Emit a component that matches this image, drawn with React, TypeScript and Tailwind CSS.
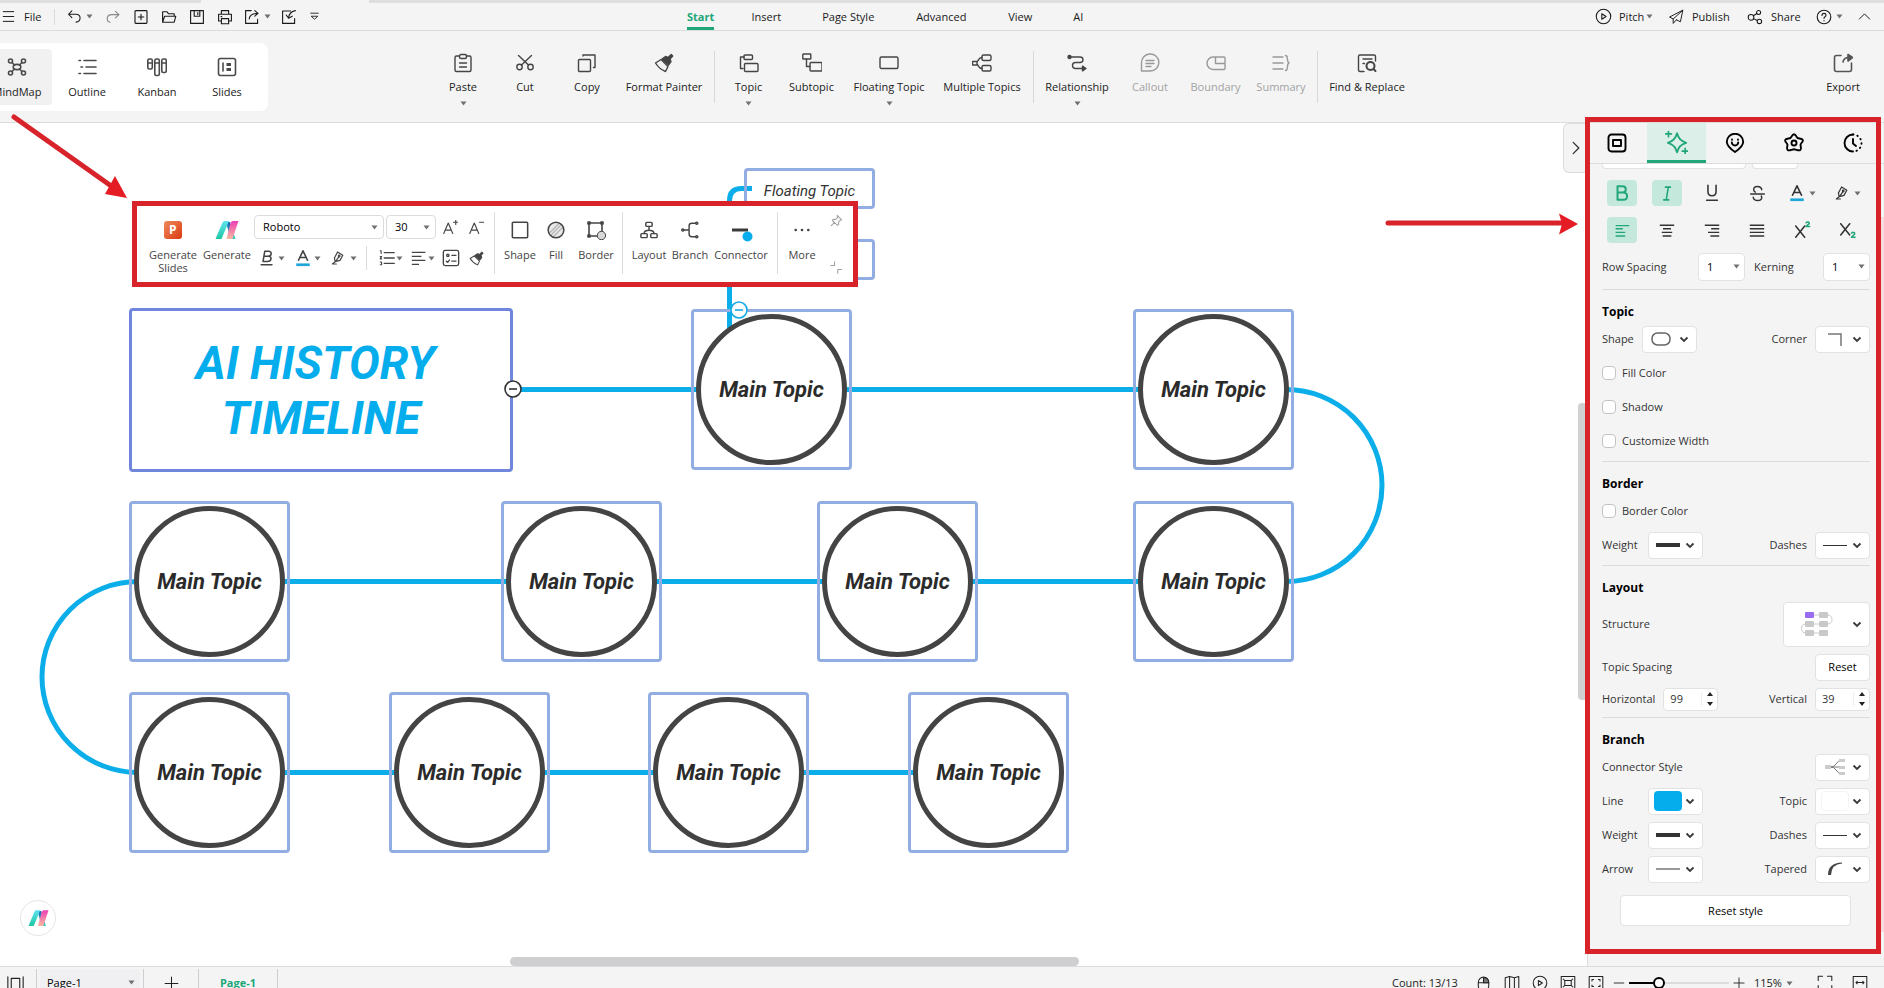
import React from 'react';

type IconProps = { size?: number; sw?: number; className?: string; children: React.ReactNode };

const Icon = ({ size = 20, sw = 1.4, className = '', children }: IconProps) => (
  <svg
    width={size}
    height={size}
    viewBox="0 0 20 20"
    fill="none"
    stroke="currentColor"
    strokeWidth={sw}
    strokeLinecap="round"
    strokeLinejoin="round"
    className={`shrink-0 ${className}`}
    aria-hidden="true"
  >
    {children}
  </svg>
);

const Caret = ({ className = '' }: { className?: string }) => (
  <svg width="7" height="5" viewBox="0 0 7 5" className={`shrink-0 text-[#707070] ${className}`} aria-hidden="true">
    <path d="M0.5 0.5h6L3.5 4.5z" fill="currentColor" />
  </svg>
);

const Chevron = () => (
  <svg width="10" height="7" viewBox="0 0 10 7" fill="none" stroke="#3a3a3a" strokeWidth="1.8" className="shrink-0" aria-hidden="true">
    <path d="M1.5 1.5L5 5l3.5-3.5" />
  </svg>
);

const Logo = ({ id, className = '' }: { id: string; className?: string }) => (
  <svg viewBox="0 0 24 18" className={className} aria-hidden="true">
    <defs>
      <linearGradient id={`${id}-teal`} x1="0" y1="0" x2="0" y2="1">
        <stop offset="0" stopColor="#5fe3f0" />
        <stop offset="1" stopColor="#1fc7a4" />
      </linearGradient>
      <linearGradient id={`${id}-blue`} x1="0" y1="0" x2="0" y2="1">
        <stop offset="0" stopColor="#1763b8" />
        <stop offset="1" stopColor="#35d0c0" />
      </linearGradient>
      <linearGradient id={`${id}-pink`} x1="0" y1="0" x2="0" y2="1">
        <stop offset="0" stopColor="#ee3fb4" />
        <stop offset="1" stopColor="#f8b9a0" />
      </linearGradient>
    </defs>
    <path d="M11 1h4L20.500 18h-5z" fill={`url(#${id}-blue)`} />
    <path d="M7.500 1.500Q8 0 9.500 0h4.500L6.500 18H0.500z" fill={`url(#${id}-teal)`} />
    <path d="M15.500 2Q16.500 0 18 0h5.500L17.500 18h-6z" fill={`url(#${id}-pink)`} />
  </svg>
);

/* ---------- icons ---------- */

const BrushIcon = ({ size = 20 }: { size?: number }) => (
  <Icon size={size}>
    <path d="M1.500 10l5.500-3.500 7 7-2.500 5C7.500 17 4 14 1.500 10z" />
    <path d="M8 6l3.500-2.500 2.700 1 3-3 1.500 1.500-2.700 3 1 2.700L14.500 12z" fill="currentColor" />
  </Icon>
);

const PenIcon = () => (
  <Icon size={16} sw={1.5}>
    <path d="M9.500 2.500l6.500 4-3.500 6.500-6 1.500-1-4.500z" />
    <path d="M6.500 14.500L3 17.500h5M11 8.500l-3.500 5" />
    <circle cx="11.500" cy="7.500" r="1" />
  </Icon>
);

const FontColorIcon = () => (
  <Icon size={18} sw={1.8}>
    <path d="M5 12.500L10 2l5 10.500M6.700 9.500h6.600" />
    <path d="M2.500 17.500h15" stroke="#1fa5d8" strokeWidth="3" strokeLinecap="butt" />
  </Icon>
);

const BoldSlantIcon = () => (
  <Icon size={18} sw={1.7}>
    <path d="M7.500 2.500h4.200c4.300 0 3.800 5.500-.5 5.500H6.600L7.500 2.500zM6.600 8h4.900c4.500 0 3.600 5.800-.9 5.800H5.600L6.600 8zM3.500 17.500h12" />
  </Icon>
);

const ListIcon = () => (
  <Icon size={18} sw={1.6}>
    <path d="M7 4h11M7 10h11M7 16h11" />
    <path d="M2.500 2h1v3M2.500 8.500h1.500l-1.500 2.500h1.500M2.500 14.500h1.500v3H2.500" strokeWidth="1.200" />
  </Icon>
);

const AlignIcon = ({ d, size = 16 }: { d: string; size?: number }) => (
  <Icon size={size} sw={1.7}>
    <path d={d} strokeLinecap="butt" />
  </Icon>
);

const CheckListIcon = () => (
  <Icon size={18} sw={1.5}>
    <rect x="1.500" y="1.500" width="17" height="17" rx="2" />
    <circle cx="6.500" cy="7" r="1.300" />
    <path d="M11 7h4.500M4.800 13.500l1.500 1.300 2-2.500M11 13.500h4.500" />
  </Icon>
);

const PlayIcon = ({ size = 17 }: { size?: number }) => (
  <Icon size={size} sw={1.3}>
    <circle cx="10" cy="10" r="8.500" />
    <path d="M8 6.800v6.400l5-3.200z" />
  </Icon>
);

/* ---------- top bar ---------- */

const quickActions = [
  {
    label: 'Redo',
    muted: true,
    icon: <path d="M13 3l4.500 4L13 11M17 7H8.500C1 7 1.500 16 6.500 16.500" />,
  },
  {
    label: 'New',
    icon: <path d="M3.500 2h13q1 0 1 1v14q0 1-1 1h-13q-1 0-1-1V3q0-1 1-1zM10 6.500v7M6.500 10h7" />,
  },
  {
    label: 'Open',
    icon: <path d="M2 16.500V3.500h5.500l2 2.500h7v3M2 16.500L4.500 9h14L16.500 16.500z" />,
  },
  {
    label: 'Save',
    icon: <path d="M2 2h16v16H2zM6.500 2v7h7V2M11 4.500v2.500" />,
  },
  {
    label: 'Print',
    icon: <path d="M5.500 6.500V2h9v4.500M5.500 15H2V6.500h16V15h-3.500M5.500 12h9v6.500h-9zM5 9.500h1" />,
  },
];

const menuTabs = [
  { label: 'Insert', width: 'ml-[18px] w-[68px]' },
  { label: 'Page Style', width: 'w-24' },
  { label: 'Advanced', width: 'w-[90px]' },
  { label: 'View', width: 'w-[68px]' },
  { label: 'AI', width: 'w-12' },
];

const TopBar = () => (
  <header className="shrink-0 bg-[#f4f4f4]">
    <div className="flex h-[3px] bg-[#dddee0]">
      <div className="ml-[201px] w-[168px] bg-[#f4f4f4]" />
    </div>
    <div className="flex h-7 items-center border-b border-[#dcdcdc] text-[#1a1a1a]">
      <div className="flex w-[687px] shrink-0 items-center">
        <button aria-label="Menu" className="flex w-4 justify-center">
          <Icon size={15} sw={1.3}>
            <path d="M3 3.500h14M3 10h14M3 16.500h14" />
          </Icon>
        </button>
        <button className="ml-2 w-[30px] text-left">File</button>
        <span className="h-4 w-px bg-[#dcdcdc]" />
        <button aria-label="Undo" className="ml-3 flex w-8 items-center gap-1">
          <Icon size={15}>
            <path d="M6.500 2.500L2 7l4.500 4.500M2.500 7H12c7.500 0 7 10 0 10.500" />
          </Icon>
          <Caret />
        </button>
        {quickActions.map((a) => (
          <button
            key={a.label}
            aria-label={a.label}
            className={`flex w-7 justify-center ${a.muted ? 'text-[#888]' : ''}`}
          >
            <Icon size={16}>{a.icon}</Icon>
          </button>
        ))}
        <button aria-label="Share file" className="ml-[5px] flex w-8 items-center gap-1">
          <Icon size={16}>
            <path d="M9 2H2v16h15v-5M6.500 12.500C7 7.500 10 5.500 17 5.500M13.500 2L17.500 5.500l-4 3.500" />
          </Icon>
          <Caret />
        </button>
        <button aria-label="Import" className="flex w-[26px] justify-center">
          <Icon size={16}>
            <path d="M12 2.500H2V18h15v-6M18 2c-5 1-8 4-8.500 9M6.500 7.500l3 4 4.500-2.500" />
          </Icon>
        </button>
        <button aria-label="More" className="flex w-6 justify-center">
          <Icon size={11} sw={1.600}>
            <path d="M3 4h14M4.500 10l5.500 5 5.500-5z" />
          </Icon>
        </button>
      </div>
      <nav className="flex h-full items-center text-center">
        <a href="#start" className="flex h-full items-center border-b-[3px] border-[#21a67a] pt-[3px] font-bold text-[#21a67a]">
          Start
        </a>
        {menuTabs.map((t) => (
          <a key={t.label} href={`#${t.label}`} className={t.width}>
            {t.label}
          </a>
        ))}
      </nav>
      <div className="ml-auto flex items-center">
        <button className="flex w-[73px] items-center">
          <PlayIcon />
          <span className="ml-[7px]">Pitch</span>
          <Caret className="ml-[2px]" />
        </button>
        <button className="flex w-[79px] items-center gap-2">
          <Icon size={16} sw={1.2}>
            <path d="M18.500 1.500L2 10l4.500 2.500L18.500 1.500 15.500 16l-5-2.500M6.500 12.500v5.500l4-4.500" />
          </Icon>
          Publish
        </button>
        <button className="flex w-[69px] items-center gap-2">
          <Icon size={16} sw={1.3}>
            <circle cx="5" cy="10.500" r="3.500" />
            <circle cx="14.500" cy="4.500" r="2.500" />
            <circle cx="15.500" cy="15.500" r="2.800" />
            <path d="M8 8.500l4.300-2.800M8 12l5 2.300" />
          </Icon>
          Share
        </button>
        <button aria-label="Help" className="flex w-[42px] items-center gap-1">
          <Icon size={16}>
            <circle cx="10" cy="10" r="8.500" />
            <path d="M7.500 8c0-3.500 5-3.200 5-.3 0 1.800-2.500 1.800-2.500 4M10 14.500v.3" />
          </Icon>
          <Caret />
        </button>
        <button aria-label="Collapse ribbon" className="w-[26px]">
          <Icon size={13} sw={1.500}>
            <path d="M2 14l8-8 8 8" />
          </Icon>
        </button>
      </div>
    </div>
  </header>
);

/* ---------- ribbon ---------- */

const modes = [
  {
    label: 'MindMap',
    active: true,
    icon: (
      <>
        <ellipse cx="10" cy="10" rx="3.800" ry="2.600" />
        <circle cx="3.500" cy="4" r="2" />
        <circle cx="16.500" cy="4" r="2" />
        <circle cx="3.500" cy="16" r="2" />
        <circle cx="16.500" cy="16" r="2" />
        <path d="M5 5.500l2.500 2.500M15 5.500L12.500 8M5 14.500L7.500 12M15 14.500L12.500 12" />
      </>
    ),
  },
  {
    label: 'Outline',
    icon: <path d="M2 3.500h1.500M7 3.500h12M4 10h1.500M9 10h10M2 16.500h1.500M7 16.500h12" />,
  },
  {
    label: 'Kanban',
    icon: (
      <>
        <rect x="0.800" y="2" width="4.500" height="10" rx="1.500" />
        <rect x="7.800" y="2" width="4.500" height="16.500" rx="1.500" />
        <rect x="14.800" y="2" width="4.500" height="13.500" rx="1.500" />
        <path d="M1 6h4M8 6h4M15 6h4" />
      </>
    ),
  },
  {
    label: 'Slides',
    icon: (
      <>
        <rect x="1.500" y="1.500" width="17" height="17" rx="2" />
        <path d="M6 6v8" />
        <path d="M9.500 7.500h4.500M9.500 12.500h4.500" strokeWidth="3" strokeLinecap="butt" />
      </>
    ),
  },
];

type Tool = { label: string; width: string; icon: React.ReactNode; caret?: boolean; off?: boolean };

const toolGroups: Tool[][] = [
  [
    {
      label: 'Paste',
      width: 'w-[62px]',
      caret: true,
      icon: (
        <>
          <path d="M6.500 3H3.500q-1.500 0-1.500 1.500v12.500q0 1.500 1.500 1.500h13q1.500 0 1.500-1.500V4.500Q18 3 16.500 3H13.500" />
          <rect x="6.500" y="1.500" width="7" height="4" rx="1.500" />
          <path d="M6.500 10h7M6.500 14h7" />
        </>
      ),
    },
    {
      label: 'Cut',
      width: 'w-[62px]',
      icon: (
        <>
          <circle cx="4.500" cy="14" r="2.700" />
          <circle cx="15.500" cy="14" r="2.700" />
          <path d="M6.500 12L16.500 2.500M13.500 12L3.500 2.500" />
        </>
      ),
    },
    {
      label: 'Copy',
      width: 'w-[62px]',
      icon: (
        <>
          <rect x="1.500" y="6.500" width="12" height="12" rx="1" />
          <path d="M6 2h12v12.500h-1.500M6 2v1" />
        </>
      ),
    },
    { label: 'Format Painter', width: 'w-[92px]', icon: null },
  ],
  [
    {
      label: 'Topic',
      width: 'w-[63px]',
      caret: true,
      icon: (
        <>
          <rect x="5" y="2" width="8.500" height="4.500" rx="1" />
          <rect x="5.500" y="10.500" width="13.500" height="8" rx="1" />
          <path d="M5 4H1.500v11.500H4" />
        </>
      ),
    },
    {
      label: 'Subtopic',
      width: 'w-[63px]',
      icon: (
        <>
          <rect x="0.800" y="1" width="8" height="5" rx="0.500" />
          <rect x="8" y="9.500" width="12" height="8.500" rx="1" />
          <path d="M4.500 6v7.500H8" />
        </>
      ),
    },
    {
      label: 'Floating Topic',
      width: 'w-[92px]',
      caret: true,
      icon: <rect x="1" y="4" width="18" height="11.500" rx="1.500" />,
    },
    {
      label: 'Multiple Topics',
      width: 'w-[94px]',
      icon: (
        <>
          <rect x="10" y="2" width="9" height="5.500" rx="1.500" />
          <rect x="10" y="12.500" width="9" height="5.500" rx="1.500" />
          <path d="M0.500 8.500h4.500v3.500H0.500zM10 4.500C6.500 4.500 7 7 5 9M10 15.500c-3.500 0-3-2.500-5-4.500" />
        </>
      ),
    },
  ],
  [
    {
      label: 'Relationship',
      width: 'w-[82px]',
      caret: true,
      icon: (
        <>
          <path d="M3 4h10c4 0 4 5.500 0 5.500H8.500c-4 0-4 6 0 6H15" />
          <circle cx="2.500" cy="4" r="1.500" fill="currentColor" />
          <path d="M15.500 13.200l3.500 2.300-3.500 2.300z" fill="currentColor" />
        </>
      ),
    },
    {
      label: 'Callout',
      width: 'w-16',
      off: true,
      icon: <path d="M1.500 18V10a8.700 8.500 0 1 1 8.700 8zM6 7.500h8M6 10.500h8M6 13.500h5" />,
    },
    {
      label: 'Boundary',
      width: 'w-[67px]',
      off: true,
      icon: <path d="M7 4h11q1 0 1 1v10.500q0 1-1 1H7C3.500 16.500 1 13.500 1 10.300S3.500 4 7 4zM9.500 4v6.500H19" />,
    },
    {
      label: 'Summary',
      width: 'w-16',
      off: true,
      icon: <path d="M2 4h10M2 10h10M2 16h10M14.500 2.500c3.500 0 .5 6.500 3.500 7.500-3 1-.0 7.500-3.500 7.500" />,
    },
  ],
  [
    {
      label: 'Find & Replace',
      width: 'w-[94px]',
      icon: (
        <>
          <path d="M7 18.500H3q-1.500 0-1.500-1.500V3.500Q1.500 2 3 2h14q1.500 0 1.500 1.500V8M6 6h9M6 10.500h1.500" />
          <circle cx="13.500" cy="13" r="4" strokeWidth="2" />
          <path d="M16.500 16l2 2" strokeWidth="2" />
        </>
      ),
    },
  ],
];

const Ribbon = () => (
  <div className="flex h-[92px] shrink-0 items-start overflow-hidden border-b border-[#dcdcdc] bg-[#f4f4f4] text-[#222]">
    <div className="-ml-6 mt-3 flex shrink-0 rounded-lg bg-white p-[6px]">
      {modes.map((m) => (
        <button
          key={m.label}
          className={`flex h-14 w-[70px] flex-col items-center gap-[7px] rounded pt-2 ${m.active ? 'bg-[#f1f1f1]' : ''}`}
        >
          <Icon size={20} sw={1.6} className="text-[#4a4a4a]">
            {m.icon}
          </Icon>
          {m.label}
        </button>
      ))}
    </div>
    <div className="ml-[164px] flex shrink-0 pt-[22px]">
      {toolGroups.map((group, i) => (
        <React.Fragment key={i}>
          {i > 0 && <span className="-mt-[2px] ml-1 mr-[2px] h-[52px] w-px bg-[#d8d8d8]" />}
          {group.map((t) => (
            <button
              key={t.label}
              disabled={t.off}
              className={`flex flex-col items-center ${t.width} ${t.off ? 'text-[#a3a3a3]' : ''}`}
            >
              <span className={t.off ? 'text-[#999]' : 'text-[#444]'}>
                {t.icon ? <Icon size={20}>{t.icon}</Icon> : <BrushIcon />}
              </span>
              <span className="mt-[6px] whitespace-nowrap">{t.label}</span>
              {t.caret && <Caret className="mt-[6px]" />}
            </button>
          ))}
        </React.Fragment>
      ))}
    </div>
    <button className="ml-auto flex w-[82px] shrink-0 flex-col items-center gap-[6px] pt-[22px]">
      <Icon size={20} sw={1.6} className="text-[#555]">
        <path d="M8 2.500H3.500Q1.500 2.500 1.500 4.500v12q0 2 2 2h13q2 0 2-2V10M10 9c.5-3 2.500-4.500 6-4.500" />
        <path d="M15 1.500l4.500 3L15 8z" fill="currentColor" />
      </Icon>
      Export
    </button>
  </div>
);

/* ---------- canvas ---------- */

// node positions on the free canvas, top-left corner
const topics = [
  { x: 691, y: 186 },
  { x: 1133, y: 186 },
  { x: 129, y: 378 },
  { x: 501, y: 378 },
  { x: 817, y: 378 },
  { x: 1133, y: 378 },
  { x: 129, y: 569 },
  { x: 389, y: 569 },
  { x: 648, y: 569 },
  { x: 908, y: 569 },
];

const Diagram = () => (
  <>
    <svg className="absolute inset-0 h-full w-full" fill="none" stroke="#0caeea" strokeWidth="5" aria-hidden="true">
      <path d="M510 266.500H1286A96 96 0 0 1 1286 458.500H138A96 95.500 0 0 0 138 649.500H980" />
      <path d="M752 65.500H741.500Q729.500 65.500 729.500 77.500V220" />
    </svg>
    <div className="absolute left-[129px] top-[185px] flex h-[164px] w-[384px] items-center justify-center rounded border-[3px] border-[#6f86dc] bg-white pt-[2px]">
      <h1 className="whitespace-pre text-center font-[Roboto,sans-serif] text-[46px] font-bold italic leading-[55px] text-[#05adec]">
        {'AI HISTORY \nTIMELINE'}
      </h1>
    </div>
    <div className="absolute left-[744px] top-[45px] flex h-[41px] w-[131px] items-center justify-center rounded border-[3px] border-[#92ade2] pt-1 font-[Roboto,sans-serif] text-[15px] italic text-[#333]">
      Floating Topic
    </div>
    <div className="absolute left-[744px] top-[116px] h-[41px] w-[131px] rounded border-[3px] border-[#92ade2]" />
    {topics.map((t, i) => (
      <div
        key={i}
        className="absolute h-[161px] w-[161px] rounded border-[3px] border-[#92ade2] p-[2px]"
        style={{ left: t.x, top: t.y }}
      >
        <div className="flex h-full items-center justify-center rounded-full border-[5px] border-[#444] bg-white font-[Roboto,sans-serif] text-[22px] font-bold italic text-[#2b2b2b]">
          Main Topic
        </div>
      </div>
    ))}
    <button aria-label="Collapse branch" className="absolute left-[504px] top-[257px]">
      <svg width="18" height="18" viewBox="0 0 18 18" fill="#fff" stroke="#333" strokeWidth="1.600">
        <circle cx="9" cy="9" r="8" />
        <path d="M5 9h8" />
      </svg>
    </button>
    <button aria-label="Collapse floating topics" className="absolute left-[730px] top-[178px]">
      <svg width="18" height="18" viewBox="0 0 18 18" fill="#fff" stroke="#12abe6" strokeWidth="1.600">
        <circle cx="9" cy="9" r="8" />
        <path d="M5 9h8" />
      </svg>
    </button>
  </>
);

const QuickItem = ({ label, width, children }: { label: string; width: string; children: React.ReactNode }) => (
  <button className={`flex shrink-0 flex-col items-center pt-[14px] ${width}`}>
    <span className="flex h-5 items-center">{children}</span>
    <span className="mt-2 leading-[13px]">{label}</span>
  </button>
);

const Rule = ({ className = '' }: { className?: string }) => (
  <span className={`mt-[6px] h-[62px] w-px shrink-0 bg-[#dcdcdc] ${className}`} />
);

const QuickToolbar = () => (
  <div className="absolute left-[132px] top-[78px] h-[86px] w-[726px] border-[5px] border-[#d8232a] bg-white">
    <div className="flex items-start pl-[10px] text-[#444]">
      <QuickItem label="Generate Slides" width="w-[52px]">
        <svg width="18" height="18" viewBox="0 0 18 18" aria-hidden="true">
          <defs>
            <linearGradient id="slides" x1="0" y1="0" x2="1" y2="1">
              <stop offset="0" stopColor="#f08a5c" />
              <stop offset="1" stopColor="#d93a12" />
            </linearGradient>
          </defs>
          <rect width="18" height="18" rx="3" fill="url(#slides)" />
          <text x="5" y="13" fontSize="12" fontWeight="700" fill="#fff">P</text>
        </svg>
      </QuickItem>
      <QuickItem label="Generate" width="ml-px w-[54px]">
        <Logo id="gen" className="h-[18px] w-6" />
      </QuickItem>
      <div className="flex w-[236px] shrink-0 flex-col">
        <div className="mt-[9px] flex items-center gap-[2px] text-black">
          <div className="relative">
            <select aria-label="Font" className="h-6 w-[130px] appearance-none rounded border border-[#dcdcdc] bg-white pl-2">
              <option>Roboto</option>
            </select>
            <Caret className="pointer-events-none absolute right-[6px] top-[10px]" />
          </div>
          <div className="relative">
            <select aria-label="Font size" className="h-6 w-[50px] appearance-none rounded border border-[#dcdcdc] bg-white pl-2">
              <option>30</option>
            </select>
            <Caret className="pointer-events-none absolute right-[6px] top-[10px]" />
          </div>
          <button aria-label="Increase font size" className="flex w-6 justify-center text-[#444]">
            <Icon size={15} sw={1.5}>
              <path d="M1 18L7 4 13 18M3.200 13.500h7.600M17 0v6M14 3h6" />
            </Icon>
          </button>
          <button aria-label="Decrease font size" className="flex w-6 justify-center text-[#444]">
            <Icon size={15} sw={1.5}>
              <path d="M1 18L7 4 13 18M3.200 13.500h7.600M14 3h6" />
            </Icon>
          </button>
        </div>
        <div className="mt-[7px] flex h-6 items-center pl-1">
          <button aria-label="Bold" className="flex w-9 items-center gap-[2px]"><BoldSlantIcon /><Caret /></button>
          <button aria-label="Font color" className="flex w-9 items-center gap-[2px]"><FontColorIcon /><Caret /></button>
          <button aria-label="Highlight" className="flex w-9 items-center gap-1"><PenIcon /><Caret /></button>
          <span className="h-6 w-px bg-[#dcdcdc]" />
          <button aria-label="Numbering" className="ml-[11px] flex w-[33px] items-center"><ListIcon /><Caret /></button>
          <button aria-label="Align" className="flex w-[31px] items-center gap-px">
            <AlignIcon d="M1 3h17M1 8h12M1 13h17M1 18h9" />
            <Caret />
          </button>
          <button aria-label="Task list" className="w-[27px]"><CheckListIcon /></button>
          <button aria-label="Copy style"><BrushIcon size={15} /></button>
        </div>
      </div>
      <Rule className="ml-1" />
      <QuickItem label="Shape" width="ml-[7px] w-9">
        <Icon size={18} sw={1.700}>
          <rect x="1.500" y="1.500" width="17" height="17" rx="1" />
        </Icon>
      </QuickItem>
      <QuickItem label="Fill" width="w-9">
        <Icon size={18} sw={1.700}>
          <path d="M3 13L13 3M4 16L16 4M7 17.500L17.500 7" stroke="#999" strokeWidth="1.500" />
          <circle cx="10" cy="10" r="8.700" fill="#d4d4d4" fillOpacity="0.500" />
        </Icon>
      </QuickItem>
      <QuickItem label="Border" width="w-11">
        <Icon size={20} sw={1.6}>
          <rect x="3" y="3" width="13" height="13" />
          <path d="M2 2h2v2H2zM15 2h2v2h-2zM2 15h2v2H2z" fill="currentColor" />
          <circle cx="15.500" cy="15.500" r="4.200" fill="#d8d8d8" strokeWidth="1" />
        </Icon>
      </QuickItem>
      <Rule className="ml-1" />
      <QuickItem label="Layout" width="ml-[5px] w-[42px]">
        <Icon size={18} sw={1.6}>
          <rect x="6.500" y="1.500" width="7" height="4.500" rx="1" />
          <rect x="1" y="14" width="7" height="4.500" rx="1" />
          <rect x="12" y="14" width="7" height="4.500" rx="1" />
          <path d="M10 6v4M4.500 14c0-5 11-5 11 0" />
        </Icon>
      </QuickItem>
      <QuickItem label="Branch" width="w-10">
        <Icon size={18} sw={1.6}>
          <circle cx="2" cy="10" r="1.200" />
          <circle cx="17.500" cy="2.500" r="1.200" />
          <circle cx="17.500" cy="17.500" r="1.200" />
          <path d="M3 10h6M16 2.500h-4q-3 0-3 3v9q0 3 3 3h4" />
        </Icon>
      </QuickItem>
      <QuickItem label="Connector" width="w-[62px]">
        <svg width="24" height="24" viewBox="0 0 24 24" aria-hidden="true">
          <path d="M3 12h16" stroke="#3a3a3a" strokeWidth="3" />
          <circle cx="18.500" cy="18.500" r="5" fill="#05adec" />
        </svg>
      </QuickItem>
      <Rule className="ml-[5px]" />
      <QuickItem label="More" width="ml-1 w-10">
        <Icon size={18}>
          <path d="M3 10h.010M10 10h.010M17 10h.010" strokeWidth="3" />
        </Icon>
      </QuickItem>
      <div className="ml-2 flex h-[76px] flex-col justify-between py-[8px] text-[#a0a0a0]">
        <button aria-label="Pin">
          <Icon size={13} sw={1.6}>
            <path d="M11 2l7 7-2 .5-3 3 .5 3.500-2 1.500L3.500 10 5 8l3.500.5 3-3zM7 13l-5 5" />
          </Icon>
        </button>
        <button aria-label="Collapse toolbar">
          <Icon size={13} sw={1.6}>
            <path d="M1 7h6V1M12 19v-6h6" />
          </Icon>
        </button>
      </div>
    </div>
  </div>
);

const Canvas = () => (
  <main className="relative min-w-0 flex-1 overflow-hidden bg-white">
    <Diagram />
    <QuickToolbar />
    <button aria-label="AI assistant" className="absolute left-5 top-[777px] flex h-9 w-9 items-center justify-center rounded-full border border-[#e4e4e4] bg-white">
      <Logo id="ai" className="h-4 w-[21px]" />
    </button>
    <div className="absolute bottom-0 left-[510px] h-[9px] w-[569px] rounded-full bg-[#cfcfd1]" />
    <div className="absolute right-0 top-[280px] h-[297px] w-[9px] rounded bg-[#d0d0d0]" />
    <button aria-label="Hide panel" className="absolute right-0 top-0 flex h-[50px] w-6 items-center justify-center rounded-l-md border border-r-0 border-[#dcdcdc] bg-[#f4f4f4] text-[#333]">
      <Icon size={14} sw={1.900}>
        <path d="M6 2l8 8-8 8" />
      </Icon>
    </button>
  </main>
);

/* ---------- side panel ---------- */

const panelTabs = [
  {
    label: 'Canvas',
    icon: (
      <>
        <rect x="1.500" y="1.500" width="17" height="17" rx="3" />
        <rect x="6" y="7" width="8" height="6" />
      </>
    ),
  },
  {
    label: 'Style',
    active: true,
    icon: (
      <>
        <path d="M10.500 2Q12 8.500 18.500 10.300 12 12 10.500 18.500 8.800 12 2.500 10.300 8.800 8.500 10.500 2z" strokeWidth="1.600" />
        <path d="M3 0v5M.5 2.500h5M17.500 15v5M15 17.500h5" strokeWidth="1.500" />
      </>
    ),
  },
  {
    label: 'Stickers',
    icon: (
      <>
        <path d="M10 19C4 15 1.800 12.500 1.800 8.800a8.200 8 0 0 1 16.400 0C18.200 12.500 16 15 10 19z" />
        <path d="M6.800 9.500c.5 4 5.900 4 6.400 0M7 6.500v.2M13 6.500v.2" />
      </>
    ),
  },
  {
    label: 'Badges',
    icon: (
      <>
        <path d="M10 1.200c2 0 2.300 2.900 3.500 3.700s4.800.3 5.300 2.100-1.900 3-2.200 4.500 1.200 4.300-.3 5.500-4.300-.7-6.300-.7-4.800 1.900-6.300.7 .0-4-.3-5.500S.7 8.800 1.200 7s4.100-1.300 5.300-2.100S8 1.200 10 1.200z" />
        <circle cx="10" cy="10" r="2.500" />
      </>
    ),
  },
  {
    label: 'History',
    icon: (
      <>
        <path d="M10 1.500a8.500 8.500 0 0 0 0 17M10 6v4.500l3 2.500" />
        <path d="M10 1.500a8.500 8.500 0 0 1 0 17" strokeDasharray="0.500 4" />
      </>
    ),
  },
];

const PanelSection = ({ title, children }: { title: string; children: React.ReactNode }) => (
  <section className="border-t border-[#dcdcdc] pb-[3px] pt-3">
    <h2 className="flex h-5 items-center text-xs font-bold text-black">{title}</h2>
    {children}
  </section>
);

const PanelRow = ({ children }: { children: React.ReactNode }) => (
  <div className="flex h-[34px] items-center justify-between">{children}</div>
);

const Picker = ({
  label,
  labelWidth = '',
  hideLabel,
  children,
}: {
  label: string;
  labelWidth?: string;
  hideLabel?: boolean;
  children: React.ReactNode;
}) => (
  <div className="flex items-center gap-2">
    {!hideLabel && <span className={labelWidth}>{label}</span>}
    <button
      aria-label={label}
      aria-haspopup="listbox"
      className="flex h-[27px] w-[55px] items-center justify-between rounded border border-[#e2e2e2] bg-white pl-px pr-[7px]"
    >
      <span className="flex flex-1 items-center justify-center">{children}</span>
      <Chevron />
    </button>
  </div>
);

const Check = ({ label }: { label: string }) => (
  <label className="flex h-[34px] items-center gap-[6px]">
    <input type="checkbox" className="h-[14px] w-[14px] appearance-none rounded-sm border border-[#c4c4c4] bg-white" />
    {label}
  </label>
);

const Stepper = ({ label, value }: { label: string; value: string }) => (
  <div className="flex items-center gap-2">
    <label htmlFor={label}>{label}</label>
    <span className="flex h-[23px] w-[55px] items-center rounded border border-[#e2e2e2] bg-white">
      <input id={label} defaultValue={value} className="w-[37px] bg-transparent pl-[6px] outline-none" />
      <span className="flex flex-1 flex-col items-center gap-[6px] border-l border-[#eee] text-[#222]">
        <button aria-label={`Increase ${label}`}>
          <svg width="6" height="4" viewBox="0 0 6 4" className="block"><path d="M0 4h6L3 0z" fill="currentColor" /></svg>
        </button>
        <button aria-label={`Decrease ${label}`}>
          <svg width="6" height="4" viewBox="0 0 6 4" className="block"><path d="M0 0h6L3 4z" fill="currentColor" /></svg>
        </button>
      </span>
    </span>
  </div>
);

const NumberSelect = ({ label }: { label: string }) => (
  <>
    <label htmlFor={label}>{label}</label>
    <span className="relative ml-auto">
      <select id={label} className="block h-7 w-[47px] appearance-none rounded border border-[#e2e2e2] bg-white pl-2 text-black">
        <option>1</option>
      </select>
      <Caret className="pointer-events-none absolute right-[5px] top-[11px]" />
    </span>
  </>
);

const ThickLine = () => <span className="h-1 w-6 bg-[#333]" />;
const ThinLine = () => <span className="h-px w-6 bg-[#333]" />;

const fmt = 'flex h-[26px] w-[30px] items-center justify-center rounded';
const fmtOn = 'flex h-[26px] w-[30px] items-center justify-center rounded bg-[#c4e8dc] text-[#21a67a]';

const SidePanel = () => (
  <aside className="w-[297px] shrink-0 overflow-hidden border-l border-[#dcdcdc] bg-[#f4f4f4] text-[#333]">
    <div className="flex h-[41px] border-b border-[#dcdcdc] text-black">
      {panelTabs.map((t) => (
        <button
          key={t.label}
          aria-label={t.label}
          className={`flex w-[59px] items-center justify-center border-b-[3px] pr-px pt-[2px] ${
            t.active ? 'border-[#21a67a] bg-[#dcefe9] text-[#21a67a]' : 'border-transparent'
          }`}
        >
          <Icon size={t.active ? 23 : 20} sw={1.900}>
            {t.icon}
          </Icon>
        </button>
      ))}
    </div>
    <div className="flex h-[5px] gap-[6px] pl-[14px]">
      <span className="w-[144px] rounded-b border border-t-0 border-[#e2e2e2] bg-white" />
      <span className="w-[46px] rounded-b border border-t-0 border-[#e2e2e2] bg-white" />
    </div>
    <div className="px-[14px]">
      <div className="mt-[11px] flex gap-[15px] pl-[5px]">
        <button aria-label="Bold" className={fmtOn}>
          <Icon size={18} sw={2.2}><path d="M5 2.500h5.500c5 0 5 7 0 7H5zM5 9.500h6.500c5.500 0 5.500 8 0 8H5z" /></Icon>
        </button>
        <button aria-label="Italic" className={fmtOn}>
          <Icon size={17} sw={1.800}><path d="M7.500 2.500h6M5.500 17.500h6M11 2.500l-2.500 15" /></Icon>
        </button>
        <button aria-label="Underline" className={fmt}>
          <Icon size={18} sw={1.700}><path d="M5.500 1.500v7c0 6 9 6 9 0v-7M4 18h12" /></Icon>
        </button>
        <button aria-label="Strikethrough" className={fmt}>
          <Icon size={17} sw={1.700}><path d="M15 5.500C14 .5 5.500.8 5.500 5.500c0 1.500 1 2.500 2 3M2 10.500h16M5 14.500c1 5 10 5 10 .5 0-.8-.2-1.500-.6-2" /></Icon>
        </button>
        <button aria-label="Text color" className={`${fmt} gap-[3px]`}><FontColorIcon /><Caret /></button>
        <button aria-label="Text highlight" className={`${fmt} gap-1`}><PenIcon /><Caret /></button>
      </div>
      <div className="mt-[11px] flex gap-[15px] pl-[5px]">
        <button aria-label="Align left" className={fmtOn}><AlignIcon d="M2 4.500h17M2 8.500h9M2 13h12M2 17.500h12" /></button>
        <button aria-label="Align center" className={fmt}><AlignIcon d="M1 4h18M5 8.500h10M3.500 13h13M4.500 17.500h11" /></button>
        <button aria-label="Align right" className={fmt}><AlignIcon d="M1 4h18M9 8.500h10M5 13h14M8 17.500h11" /></button>
        <button aria-label="Justify" className={fmt}><AlignIcon d="M1 4h18M1 8.500h18M1 13h18M1 17.500h18" /></button>
        <button aria-label="Superscript" className={fmt}>
          <Icon size={18} sw={1.700}>
            <path d="M3 5.500L13 18M13 5.500L3 18" />
            <path d="M14.500 2c1-1.500 4-1 3.500 1L14.500 6H18.500" stroke="#21a67a" />
          </Icon>
        </button>
        <button aria-label="Subscript" className={fmt}>
          <Icon size={18} sw={1.700}>
            <path d="M3 3L13 15.500M13 3L3 15.500" />
            <path d="M15 13.500c1-1.500 4-1 3.500 1L15 18H19" stroke="#21a67a" />
          </Icon>
        </button>
      </div>
      <div className="mb-2 mt-[10px] flex h-7 items-center">
        <span className="flex w-[143px] items-center"><NumberSelect label="Row Spacing" /></span>
        <span className="ml-[9px] flex flex-1 items-center"><NumberSelect label="Kerning" /></span>
      </div>

      <PanelSection title="Topic">
        <PanelRow>
          <Picker label="Shape">
            <svg width="20" height="14" fill="none" stroke="#666" strokeWidth="1.500"><rect x="1" y="1" width="18" height="12" rx="5.500" /></svg>
          </Picker>
          <Picker label="Corner">
            <svg width="14" height="13" fill="none" stroke="#777" strokeWidth="1.500"><path d="M0 1h13v12" /></svg>
          </Picker>
        </PanelRow>
        <Check label="Fill Color" />
        <Check label="Shadow" />
        <Check label="Customize Width" />
      </PanelSection>

      <PanelSection title="Border">
        <Check label="Border Color" />
        <PanelRow>
          <Picker label="Weight" labelWidth="w-[38px]"><ThickLine /></Picker>
          <Picker label="Dashes"><ThinLine /></Picker>
        </PanelRow>
      </PanelSection>

      <PanelSection title="Layout">
        <div className="flex h-[52px] items-center justify-between">
          Structure
          <button aria-label="Structure" aria-haspopup="listbox" className="flex h-[45px] w-[87px] items-center justify-between rounded border border-[#e2e2e2] bg-white pl-4 pr-[7px]">
            <svg width="34" height="26" viewBox="0 0 34 26" aria-hidden="true">
              <path d="M8 4h19q5 0 5 4.500t-5 4.500H6q-4.500 0-4.500 4.500T6 22h16" fill="none" stroke="#ccc" />
              <rect x="5" y="1" width="9" height="6" rx="1" fill="#9a6cf0" />
              <g fill="#c9c9c9">
                <rect x="19" y="1" width="9" height="6" rx="1" />
                <rect x="5" y="10" width="9" height="6" rx="1" />
                <rect x="19" y="10" width="9" height="6" rx="1" />
                <rect x="5" y="19" width="9" height="6" rx="1" />
                <rect x="19" y="19" width="9" height="6" rx="1" />
              </g>
            </svg>
            <Chevron />
          </button>
        </div>
        <PanelRow>
          Topic Spacing
          <button className="h-[27px] w-[55px] rounded border border-[#e2e2e2] bg-white text-black">Reset</button>
        </PanelRow>
        <div className="flex h-[30px] items-center justify-between">
          <Stepper label="Horizontal" value="99" />
          <Stepper label="Vertical" value="39" />
        </div>
      </PanelSection>

      <PanelSection title="Branch">
        <PanelRow>
          Connector Style
          <Picker label="Connector Style" hideLabel>
            <svg width="20" height="18" viewBox="0 0 20 18" aria-hidden="true">
              <path d="M5 9h10M6 9q3 0 5-3t5-4M6 9q3 0 5 3t5 4" fill="none" stroke="#777" />
              <path d="M0 7h6v4H0zM14 1h6v3h-6zM14 8h6v3h-6zM14 14h6v3h-6z" fill="#ccc" />
            </svg>
          </Picker>
        </PanelRow>
        <PanelRow>
          <Picker label="Line" labelWidth="w-[38px]"><span className="h-5 w-7 rounded bg-[#05adec]" /></Picker>
          <Picker label="Topic"><span className="h-5 w-7 rounded border border-[#f4f4f4] bg-white" /></Picker>
        </PanelRow>
        <PanelRow>
          <Picker label="Weight" labelWidth="w-[38px]"><ThickLine /></Picker>
          <Picker label="Dashes"><ThinLine /></Picker>
        </PanelRow>
        <PanelRow>
          <Picker label="Arrow" labelWidth="w-[38px]"><span className="h-[2px] w-6 bg-[#999]" /></Picker>
          <Picker label="Tapered">
            <svg width="14" height="14" viewBox="0 0 14 14" aria-hidden="true">
              <path d="M0 13Q0 1 14 .5v1Q3.500 2 3 13z" fill="#444" />
            </svg>
          </Picker>
        </PanelRow>
      </PanelSection>
      <button className="ml-[18px] mt-[6px] h-[31px] w-[231px] rounded border border-[#e2e2e2] bg-white text-black">Reset style</button>
    </div>
  </aside>
);

/* ---------- status bar ---------- */

const Divider = () => <span className="h-7 w-px bg-[#cfcfcf]" />;

const StatusBar = () => (
  <footer className="h-[22px] shrink-0 overflow-hidden border-t border-[#dcdcdc] bg-[#f4f4f4]">
    <div className="flex h-8 items-center text-[#222]">
      <button aria-label="Outline view" className="flex w-9 justify-center pr-[6px]">
        <Icon size={17} sw={1.300}><path d="M1 2v16M19 2v16M5 4h10v12H5z" /></Icon>
      </button>
      <Divider />
      <div className="relative mx-[3px]">
        <select aria-label="Page" className="h-7 w-[100px] appearance-none rounded bg-[#f0f0f3] pl-[7px] text-black">
          <option>Page-1</option>
        </select>
        <Caret className="pointer-events-none absolute right-[5px] top-[11px]" />
      </div>
      <Divider />
      <button aria-label="Add page" className="flex w-[54px] justify-center">
        <Icon size={15} sw={1.4}><path d="M1.500 10h17M10 1.500v17" /></Icon>
      </button>
      <Divider />
      <button className="w-[78px] font-bold text-[#21a67a]">Page-1</button>
      <Divider />
      <span className="ml-auto w-[78px] whitespace-nowrap">Count: 13/13</span>
      <button aria-label="Mouse mode" className="flex w-[27px] justify-center">
        <Icon size={15}>
          <path d="M3 9c0-10 14-10 14 0v4c0 8-14 8-14 0zM3 9h14" />
          <path d="M10 2v7h7c0-4-2-7-7-7z" fill="#777" />
        </Icon>
      </button>
      <button aria-label="Map" className="flex w-[29px] justify-center">
        <Icon size={16} sw={1.3}><path d="M1.500 3.500L7 2l6 1.500L18.500 2v14.500L13 18l-6-1.500L1.500 18zM7 2v14.500M13 3.500V18" /></Icon>
      </button>
      <button aria-label="Play" className="flex w-7 justify-center"><PlayIcon size={16} /></button>
      <button aria-label="Fit page" className="flex w-7 justify-center">
        <Icon size={16} sw={1.3}><path d="M1.500 2h17v16h-17zM6 7h8v6H6zM4 5l2 2M16 5l-2 2M4 15l2-2M16 15l-2-2" /></Icon>
      </button>
      <button aria-label="Fit selection" className="flex w-7 justify-center">
        <Icon size={16} sw={1.3}><path d="M1.500 2h17v16h-17zM5 7.500v-2h2M15 7.500v-2h-2M5 12.500v2h2M15 12.500v2h-2" /></Icon>
      </button>
      <button aria-label="Zoom out" className="flex w-[18px] justify-center">
        <Icon size={12} sw={1.500}><path d="M2 10h16" /></Icon>
      </button>
      <input
        type="range"
        aria-label="Zoom"
        defaultValue={27}
        className="ml-px h-[2px] w-[100px] appearance-none bg-[linear-gradient(to_right,#000_28%,#ddd_28%)] [&::-webkit-slider-thumb]:h-3 [&::-webkit-slider-thumb]:w-3 [&::-webkit-slider-thumb]:appearance-none [&::-webkit-slider-thumb]:rounded-full [&::-webkit-slider-thumb]:border-2 [&::-webkit-slider-thumb]:border-black [&::-webkit-slider-thumb]:bg-white"
      />
      <button aria-label="Zoom in" className="ml-px flex w-[18px] justify-center">
        <Icon size={12} sw={1.500}><path d="M1.500 10h17M10 1.500v17" /></Icon>
      </button>
      <button className="ml-[6px] flex w-[53px] items-center gap-1">
        115%
        <Caret />
      </button>
      <button aria-label="Full screen" className="flex w-9 justify-center">
        <Icon size={16} sw={1.3}><path d="M1.500 7V1.500H7M13 1.500h5.500V7M1.500 13v5.500H7M13 18.500h5.500V13" /></Icon>
      </button>
      <button aria-label="Fit width" className="mr-[7px] flex w-[34px] justify-center">
        <Icon size={16} sw={1.3}><path d="M1.500 2h17v16h-17zM5 9.500h10M6.500 8L5 9.500 6.500 11M13.500 8l1.500 1.500-1.500 1.500" /></Icon>
      </button>
    </div>
  </footer>
);

/* ---------- red call-outs drawn over the window ---------- */

const Annotations = () => (
  <div className="pointer-events-none absolute inset-0">
    <svg className="absolute inset-0 h-full w-full" aria-hidden="true">
      <path d="M14 117L114 188" stroke="#d8232a" strokeWidth="5" strokeLinecap="round" />
      <path d="M127 198L105 194L110 185L115 176z" fill="#e51c23" />
      <path d="M1388 223H1564" stroke="#d8232a" strokeWidth="5" strokeLinecap="round" />
      <path d="M1578 224L1559 213.500L1562 224L1559 234.500z" fill="#e51c23" />
    </svg>
    <div className="absolute right-0 top-[217px] h-[715px] w-[3px] bg-[#f6dcdf]" />
    <div className="absolute right-[3px] top-[117px] h-[837px] w-[296px] border-[5px] border-[#d8232a]" />
  </div>
);

const App = () => (
  <div className="relative flex h-screen flex-col overflow-hidden bg-white font-['Open_Sans','Noto_Sans',sans-serif] text-[11px] leading-[16px]">
    <TopBar />
    <Ribbon />
    <div className="flex min-h-0 flex-1">
      <Canvas />
      <SidePanel />
    </div>
    <StatusBar />
    <Annotations />
  </div>
);

export default App;
